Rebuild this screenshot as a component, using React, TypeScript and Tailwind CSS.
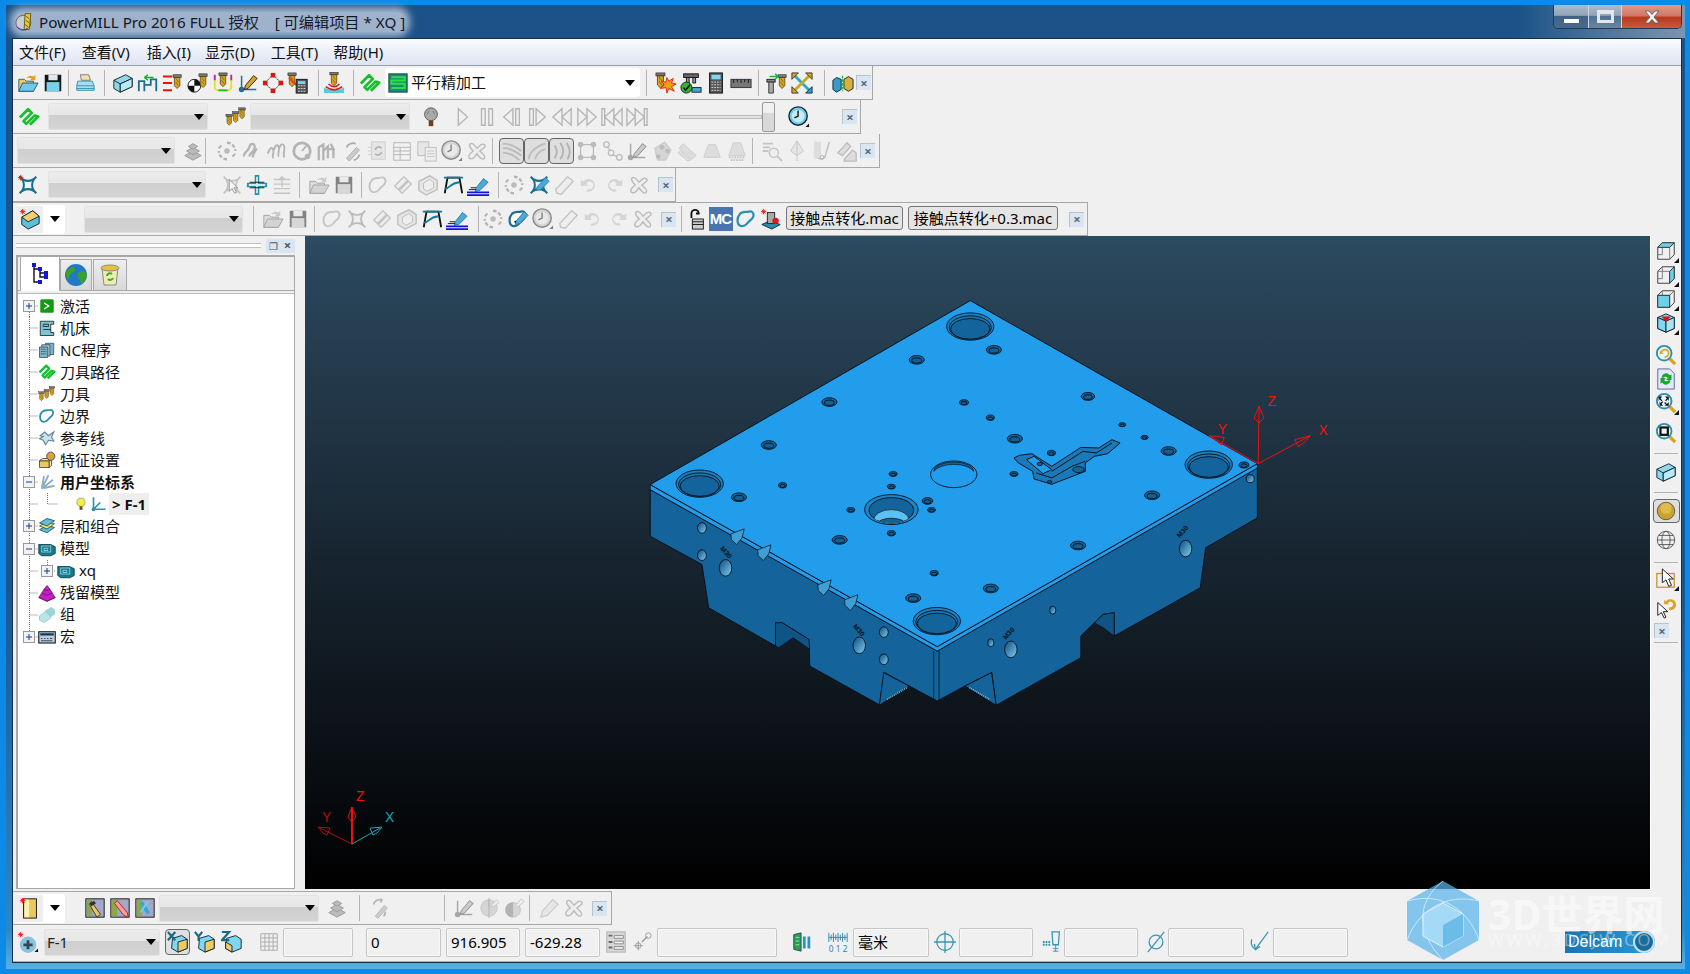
import React from 'react';

type N = React.ReactNode;
const TL = '#1e6f8f';
const G = '#d9a520';
const tool = (x: number, y: number, s = 1) => (
  <g transform={`translate(${x} ${y}) scale(${s})`}>
    <rect x="0" y="0" width="9" height="3" fill="#777" stroke="#222" strokeWidth=".6" />
    <path d="M1.5 3h6v9l-3 3-3-3z" fill={G} stroke="#3a2a00" strokeWidth=".7" />
    <path d="M3 4l3 4M3 8l3 4" stroke="#7a5500" strokeWidth=".8" />
  </g>
);
const cube = (a: string, b: string, c: string) => (
  <>
    <path d="M12 2l9 4v12l-9 4-9-4V6z" fill={a} stroke="#123" strokeWidth="1" />
    <path d="M3 6l9 4 9-4M12 10v12" fill="none" stroke="#123" strokeWidth="1" />
    <path d="M3 6l9 4v12l-9-4z" fill={b} stroke="#123" />
    <path d="M21 6l-9 4v12l9-4z" fill={c} stroke="#123" />
  </>
);
const wire = (fill: string) => (
  <>
    <path d="M8 3h13v13l-5 5H3V8z" fill="none" stroke="#333" />
    <path d="M3 8h13v13M16 8l5-5M8 3v13H3" fill="none" stroke="#777" />
    {fill === 't' && <path d="M3 8l5-5h13l-5 5z" fill="#6fd0ea" stroke="#333" />}
    {fill === 'r' && <path d="M16 8l5-5v13l-5 5z" fill="#6fd0ea" stroke="#333" />}
    {fill === 'f' && <rect x="3" y="8" width="13" height="13" fill="#6fd0ea" stroke="#333" />}
  </>
);
const lens = (inner: N) => (
  <>
    <path d="M15 15l7 7" stroke="#d9a520" strokeWidth="3.5" />
    <circle cx="10" cy="10" r="8" fill="#e8f6fa" stroke="#2e8ea8" strokeWidth="2" />
    {inner}
  </>
);
const BLOB = 'M5 7c3-4 7-2 10-3s6 1 5 5-4 4-6 7-6 5-9 3-3-9 0-12z';
const STAR = 'M3 3c5 6 13 6 18 0-6 5-6 13 0 18-5-6-13-6-18 0 6-5 6-13 0-18z';
const SPATH = 'M3 13L13 3l4 4L7 17zM8 18L18 8l3 3-10 10z';
const spark = <path d="M4 1v6M1 4h6M2 2l4 4M6 2L2 6" stroke="#f01010" strokeWidth="1" />;
const I: Record<string, N> = {
  app: <><circle cx="10" cy="13" r="9" fill="#c8ccd4" stroke="#555" /><path d="M12 2h7l-2 19h-6z" fill="#e6c93a" stroke="#5a4a00" /><path d="M13 5l4 3M13 10l4 3M12 15l4 3" stroke="#5a4a00" /><path d="M2 18q8 6 14 1" fill="none" stroke="#2a30c0" /></>,
  tW: wire('t'),
  rW: wire('r'),
  fW: wire('f'),
  open: <><path d="M2 8h6l2 2h8v11H2z" fill="#f0cc60" stroke="#1e5f80" /><path d="M2 21l4-9h17l-5 9z" fill="#72c8ea" stroke="#1e5f80" /><path d="M10 7c2-3 5-4 8-2l2-2v6h-6l2-2c-2-1-4-1-6 0z" fill="#e2a01c" /></>,
  save: <><rect x="3" y="3" width="18" height="18" fill="#161616" /><rect x="7" y="3" width="10" height="6" fill="#dfe8ec" /><rect x="5" y="11" width="14" height="10" fill="#74d2ea" /></>,
  print: <><path d="M7 3h9l2 6H8z" fill="#f5dfae" stroke="#777" /><path d="M4 10h16l2 5v5H3v-5z" fill="#a8dcef" stroke="#3c8fb0" /><path d="M3 15h19M3 18h19" stroke="#3c8fb0" /></>,
  box: <><path d="M2 9l13-6 7 4v9l-13 6-7-4z" fill="#8fd8ea" stroke="#123" /><path d="M2 9l7 4 13-6M9 13v9" fill="none" stroke="#123" /><path d="M9 13l13-6v9l-13 6z" fill="#b8eaf4" stroke="#123" /></>,
  leads: <><path d="M2 21V10h6v11M8 14h7V8h6v13" fill="none" stroke={TL} strokeWidth="2" /><path d="M8 6h10M8 6l4-3M8 6l4 3" stroke="#1aa830" strokeWidth="1.6" /></>,
  toolRed: <><path d="M1 5h10M1 12h10M1 20h10" stroke="#ee1010" strokeWidth="2.2" />{tool(12, 3)}</>,
  toolBall: <><circle cx="8" cy="15" r="7" fill="#fff" stroke="#111" /><path d="M8 8a7 7 0 0 1 7 7H8zM8 15v7a7 7 0 0 1-7-7z" fill="#111" />{tool(13, 2)}</>,
  toolU: <><path d="M3 3v12a4 4 0 0 0 4 5h10a4 4 0 0 0 4-5V3" fill="none" stroke="#e8e020" strokeWidth="2" /><path d="M3 3v6M21 3v6" stroke="#c020c0" strokeWidth="2" /><path d="M7 20h10" stroke="#18c030" strokeWidth="2" />{tool(7.5, 1)}</>,
  axisPen: <><path d="M5 4v15h16" fill="none" stroke={TL} strokeWidth="1.6" /><circle cx="5" cy="19" r="3" fill={TL} /><path d="M9 15l9-11 4 3-10 11-4 1z" fill={G} stroke="#222" /></>,
  dots: <><path d="M12 3l9 9-9 9-9-9z" fill="none" stroke="#222" strokeDasharray="2 1" /><rect x="9.5" y="1" width="5" height="5" fill="#d01818" /><rect x="18" y="9.5" width="5" height="5" fill="#d01818" /><rect x="9.5" y="18" width="5" height="5" fill="#d01818" /><rect x="1" y="9.5" width="5" height="5" fill="#d01818" /></>,
  toolCalc: <>{tool(1, 1)}<path d="M2 6l8 8" stroke="#ee4010" strokeWidth="2" /><rect x="10" y="8" width="12" height="15" fill="#555" stroke="#111" /><rect x="12" y="10" width="8" height="3" fill="#7fd8ef" /><path d="M12 15h8M12 18h8M12 21h8" stroke="#ddd" strokeDasharray="2 1" /></>,
  mill: <><path d="M1 23V17q11 6 22 0v6z" fill="#5cc8e0" /><path d="M3 16q9 7 18 0M6 13q6 6 12 0" fill="none" stroke="#e01818" strokeWidth="1.6" />{tool(7.5, 0)}</>,
  path: <path d="M2 12.500L11 3.500l4 4-9 9 3 3 9-9 4 1-9 9" fill="none" stroke="#16c02c" strokeWidth="3" strokeLinejoin="round" />,
  greenBox: <><rect x="1" y="1" width="22" height="22" fill="#1a8a7a" stroke="#0a3a30" /><path d="M4 5h16v4H4v4h16v5H4" fill="none" stroke="#30e040" strokeWidth="2.4" /></>,
  toolStar: <>{tool(1, 1, 1.1)}<path d="M13 6l2 4 5-3-2 5 5 1-5 3 3 5-6-3-2 5-1-6-6 1 4-4-3-4 5 1z" fill="#f0a010" stroke="#e02010" /></>,
  toolCheck: <><rect x="4" y="2" width="16" height="4" fill="#666" stroke="#111" /><path d="M7 6h3v6H7zM14 6h3v6h-3z" fill="#999" stroke="#111" /><rect x="13" y="17" width="10" height="5" fill="#4aa8d0" stroke="#123" /><circle cx="7" cy="17" r="6" fill="#38b030" stroke="#123" /><path d="M4 17l2 3 5-6" fill="none" stroke="#111" strokeWidth="1.6" /></>,
  calc: <><rect x="5" y="1" width="14" height="22" fill="#555" stroke="#111" /><rect x="7" y="3" width="10" height="5" fill="#7fd8ef" /><path d="M7 11h10M7 14h10M7 17h10M7 20h10" stroke="#ddd" strokeDasharray="2 1" /></>,
  ruler: <><rect x="1" y="8" width="22" height="9" fill="#777" stroke="#333" /><path d="M4 8v4M8 8v3M12 8v4M16 8v3M20 8v4" stroke="#111" /></>,
  toolMove: <><rect x="1" y="8" width="9" height="3" fill="#888" stroke="#222" /><path d="M3 11h5v12H3z" fill="#aaa" stroke="#333" />{tool(13, 3)}<path d="M4 5h9M13 5l-3-3M13 5l-3 3" stroke="#22b030" strokeWidth="1.6" /></>,
  arrows4: <><path d="M3 3l18 18" stroke="#2ca8cf" strokeWidth="3" /><path d="M21 3L3 21" stroke="#c9a820" strokeWidth="3" /><path d="M1 1h7L1 8zM23 1v7l-7-7zM1 23v-7l7 7z" fill={G} stroke="#333" /><path d="M23 23h-7l7-7z" fill="#2ca8cf" stroke="#123" /></>,
  dualBox: <><path d="M1 9l4-3 5 2v11l-5 3-4-3z" fill="#3a9ac8" stroke="#123" /><path d="M13 8l5-3 5 3v10l-5 3-5-3z" fill="#d8b040" stroke="#123" /><path d="M11.5 4v17" stroke="#22c040" strokeWidth="1.5" strokeDasharray="3 1" /></>,
  tools3: <>{tool(1, 9, .8)}{tool(8, 6, .8)}{tool(15, 2, .8)}</>,
  bulb: <><circle cx="12" cy="9" r="7" fill="#aaa" stroke="#555" /><path d="M10 5l-2 4M14 5l2 4" stroke="#777" /><rect x="9.5" y="16" width="5" height="6" fill="#7a3a20" /></>,
  bulbY: <><circle cx="12" cy="9" r="7" fill="#f6ee40" stroke="#777" /><rect x="9.5" y="16" width="5" height="6" fill="#6a4a20" /></>,
  play: <path d="M8 3l10 9-10 9z" fill="none" stroke="#b5b5b5" strokeWidth="1.5" />,
  pause: <path d="M6 3h4v18H6zM14 3h4v18h-4z" fill="none" stroke="#b5b5b5" strokeWidth="1.5" />,
  stepB: <path d="M13 3L3 12l10 9zM16 3h4v18h-4z" fill="none" stroke="#b5b5b5" strokeWidth="1.5" />,
  stepF: <path d="M11 3l10 9-10 9zM4 3h4v18H4z" fill="none" stroke="#b5b5b5" strokeWidth="1.5" />,
  prev: <path d="M12 3L2 12l10 9zM22 3l-10 9 10 9z" fill="none" stroke="#b5b5b5" strokeWidth="1.5" />,
  next: <path d="M12 3l10 9-10 9zM2 3l10 9-10 9z" fill="none" stroke="#b5b5b5" strokeWidth="1.5" />,
  first: <path d="M1 3h3v18H1zM14 3L4 12l10 9zM23 3l-9 9 9 9z" fill="none" stroke="#b5b5b5" strokeWidth="1.5" />,
  last: <path d="M23 3h-3v18h3zM10 3l10 9-10 9zM1 3l9 9-9 9z" fill="none" stroke="#b5b5b5" strokeWidth="1.5" />,
  clock: <><circle cx="11" cy="11" r="10" fill="#72cbe8" stroke="#123" strokeWidth="1.5" /><circle cx="11" cy="11" r="7" fill="#c4ecf6" /><path d="M11 5v6l-4 2" fill="none" stroke="#111" strokeWidth="1.5" /><path d="M23 19v4h-4z" fill="#111" /></>,
  stack: <g fill="#bbb" stroke="#999"><path d="M3 17l9-5 9 5-9 5z" /><path d="M5 12l7-4 7 4-7 4z" /><path d="M7 7l5-3 5 3-5 3z" /></g>,
  spin: <><circle cx="12" cy="12" r="3" fill="#888" /><path d="M12 3a9 9 0 0 1 9 9M12 21a9 9 0 0 1-9-9" fill="none" stroke="#777" strokeWidth="2.5" strokeDasharray="4 2" /><path d="M3 9l3-3M21 15l-3 3" stroke="#777" strokeWidth="2" /></>,
  wave: <path d="M3 18c0-6 5-5 6-10s6-5 6 0-5 5-6 10M13 19c0-6 3-6 4-10" fill="none" stroke="#777" strokeWidth="2.5" />,
  wave2: <path d="M2 15c2-7 5-8 6-4s-2 7 0 9M8 12c2-7 5-8 6-4s-2 8 0 10M14 10c2-7 5-6 6-3s-2 9 0 12" fill="none" stroke="#777" strokeWidth="2" />,
  gauge: <><circle cx="12" cy="12" r="9" fill="none" stroke="#777" strokeWidth="3" /><path d="M12 12l5-6" stroke="#777" strokeWidth="2" /><circle cx="18" cy="18" r="3" fill="#777" /></>,
  pArrow: <path d="M3 22V8l5-3v17M8 12l5-5v13M13 10h6l-3-6M19 10v10" fill="none" stroke="#777" strokeWidth="2.5" />,
  penRot: <><path d="M6 20l11-12 3 3-11 12z" fill="#aaa" stroke="#666" /><path d="M6 8a8 8 0 0 1 10-4M20 16a8 8 0 0 1-6 6" fill="none" stroke="#666" strokeWidth="2" /></>,
  docs: <><rect x="6" y="2" width="15" height="19" fill="#ddd" stroke="#aaa" /><path d="M2 8h4M2 12h4M2 16h4" stroke="#aaa" /><path d="M10 11a4 4 0 0 1 7-2M17 13a4 4 0 0 1-7 2" fill="none" stroke="#777" strokeWidth="2" /></>,
  table: <><rect x="3" y="3" width="18" height="19" fill="#f4f4f4" stroke="#777" /><path d="M3 8h18M3 12h18M3 16h18M10 8v14" stroke="#777" /></>,
  copy: <><rect x="2" y="2" width="12" height="15" fill="#ddd" stroke="#888" /><rect x="10" y="8" width="12" height="15" fill="#eee" stroke="#888" /><path d="M12 12h8M12 15h8M12 18h8" stroke="#999" /></>,
  cross: <path d="M5 4c3-2 5 3 7 5 2-2 5-6 8-4s-2 5-5 7c2 2 7 5 5 8s-6-2-8-5c-2 3-5 7-8 5s1-6 4-8C6 10 2 6 5 4z" fill="#eee" stroke="#888" strokeWidth="1.5" />,
  surf1: <path d="M2 9c6-1 12 2 20 8M2 14c6 0 12 2 18 8M2 4c8 0 14 3 20 8" fill="none" stroke="#999" strokeWidth="2" />,
  surf2: <path d="M3 21c1-8 8-14 18-17M10 21c1-5 5-9 11-11" fill="none" stroke="#999" strokeWidth="2" />,
  surf3: <path d="M4 6c4 6 2 10 0 14M10 3c5 7 4 13 0 18M17 3c4 6 4 13 1 18" fill="none" stroke="#888" strokeWidth="2" />,
  dots4: <><path d="M5 5h14v14H5z" fill="none" stroke="#888" strokeWidth="1.4" /><g fill="#888"><circle cx="5" cy="5" r="3" /><circle cx="19" cy="5" r="3" /><circle cx="5" cy="19" r="3" /><circle cx="19" cy="19" r="3" /></g></>,
  nodes: <g fill="none" stroke="#888" strokeWidth="1.4"><circle cx="6" cy="5" r="3" /><circle cx="11" cy="14" r="3" /><circle cx="20" cy="19" r="3" /><path d="M7 8l3 3M13 16l4 2" /></g>,
  fan: <><path d="M4 9l11-7 7 9-6 11H7z" fill="#bbb" stroke="#999" /><g fill="#888"><circle cx="8" cy="18" r="2.5" /><circle cx="12" cy="8" r="2.5" /><circle cx="18" cy="12" r="2.5" /></g></>,
  diag: <path d="M3 9l5-5 14 13-5 4zM2 14l3-2 11 10-3 1z" fill="#ccc" stroke="#aaa" />,
  trap: <path d="M8 5h8l5 14H3z" fill="#ccc" stroke="#aaa" />,
  trap2: <><path d="M8 3h8l5 14H3z" fill="#ccc" stroke="#aaa" /><path d="M3 19h18M5 22h14" stroke="#999" strokeDasharray="2 1" strokeWidth="2" /></>,
  search: <><path d="M2 4h11M2 8h8M2 12h6" stroke="#999" strokeWidth="2" /><circle cx="14" cy="14" r="5" fill="#eee" stroke="#999" strokeWidth="1.5" /><path d="M18 18l5 5" stroke="#999" strokeWidth="2" /></>,
  bulbT: <><path d="M12 1l7 11-7 5-7-5z" fill="#ddd" stroke="#999" /><path d="M12 1v22" stroke="#999" /></>,
  uT: <><path d="M5 2v14a6 6 0 0 0 10 3l5-17" fill="none" stroke="#888" strokeWidth="1.5" /><path d="M3 2l8 0v18H3z" fill="#ccc" /><circle cx="12" cy="19" r="2" fill="none" stroke="#777" /></>,
  stackT: <path d="M2 14L12 3l4 4-9 10zM9 21l9-10 4 3v9H9z" fill="#ccc" stroke="#888" strokeWidth="1.4" />,
  star: <><path d={STAR} fill="#e8f6fa" stroke={TL} strokeWidth="2.2" />{spark}</>,
  star2: <path d={STAR} fill="#eee" stroke="#888" strokeWidth="2" />,
  starCur: <><path d={STAR} fill="#eee" stroke="#999" strokeWidth="2" /><path d="M9 6v13l3-3 3 5 2-1-3-5h4z" fill="#fff" stroke="#333" /></>,
  plus: <><path d="M12 1v22M1 12h22" stroke="#2a90a8" strokeWidth="5" /><path d="M12 3v18M3 12h18" stroke="#c8eef6" strokeWidth="2" /><path d="M4 9h16M4 15h16" stroke="#111" /></>,
  lift: <path d="M3 6h18M3 11h18M3 16h18M3 21h18M12 14V3M9 6l3-3 3 3" fill="none" stroke="#999" strokeWidth="1.5" />,
  blob: <path d={BLOB} fill="none" stroke="#999" strokeWidth="2" />,
  blobT: <path d={BLOB} fill="none" stroke="#2a90b0" strokeWidth="2.4" />,
  sShape: <path d={SPATH} fill="#eee" stroke="#999" strokeWidth="1.5" />,
  boxIn: <><path d="M2 8l12-6 8 5v10l-12 6-8-5z" fill="#ddd" stroke="#888" strokeWidth="1.4" /><path d="M7 10l7-4 4 3v6l-7 4-4-3z" fill="#eee" stroke="#888" /></>,
  frame: <><path d="M3 21L6 4h13l3 17" fill="none" stroke="#111" strokeWidth="2" /><path d="M2 4h21M3 16c6 0 5-6 16-7" fill="none" stroke="#167a96" strokeWidth="2" /></>,
  penBlue: <><path d="M10 15l8-10 5 4-9 9-5 1z" fill="#4aaad8" stroke="#2a7aa8" /><path d="M4 15h6M2 17h8" stroke="#111" /><path d="M0 20h24M0 23h24" stroke="#1010e0" strokeWidth="2" /></>,
  starPen: <><path d={STAR} fill="#e8f6fa" stroke={TL} strokeWidth="2.2" /><path d="M10 14l9-10 4 4-9 9-5 1z" fill="#4aaad8" stroke="#2a7aa8" /></>,
  blobPen: <><path d={BLOB} fill="#fff" stroke={TL} strokeWidth="2.4" /><path d="M10 14l9-10 4 4-9 9-5 1z" fill="#4aaad8" stroke="#2a7aa8" /><circle cx="9" cy="15" r="1" fill="#111" /></>,
  eraser: <path d="M3 17L16 3l6 5L9 22l-5-1z" fill="#eee" stroke="#999" strokeWidth="1.5" />,
  undo: <path d="M6 8a7 7 0 1 1 3 11l2-3a4 4 0 1 0-2-5l2 2H3V6l2 2z" fill="#bbb" />,
  redo: <path d="M18 8a7 7 0 1 0-3 11l-2-3a4 4 0 1 1 2-5l-2 2h8V6l-2 2z" fill="#bbb" />,
  lock: <><path d="M7 11V6a4 4 0 0 1 8 0h-3" fill="none" stroke="#111" strokeWidth="2" /><rect x="8" y="12" width="12" height="11" fill="#ccc" stroke="#111" /><path d="M8 15h12M8 18h12" stroke="#111" /></>,
  macro: <><path d="M2 18l9-4 11 4-9 5z" fill="#2a90b0" stroke="#123" /><rect x="8" y="5" width="8" height="12" fill="#aaa" stroke="#222" /><circle cx="17" cy="14" r="3.5" fill="#e01818" />{spark}</>,
  boxNew: <><path d="M3 10l12-7 7 6v8l-12 6-7-5z" fill="#5cc0d8" stroke="#123" /><path d="M3 10l7 5 12-6-7-6z" fill="#f2d070" stroke="#123" />{spark}</>,
  cubeIso: <>{cube('#7fd8ef', '#7fd8ef', '#a8e4f2')}<path d="M7 5h10l-5 6z" fill="#e01010" /></>,
  zBack: lens(<path d="M6 11a5 5 0 1 1 4 4l1-2a3 3 0 1 0-3-3l2 1H5V7l1 1z" fill={G} />),
  refDoc: <><path d="M3 1h13l5 5v17H3z" fill="#e4e8f8" stroke="#5060a0" /><path d="M7 10a5 5 0 0 1 9-2l2-1v6h-6l2-2a3 3 0 0 0-5 0zM17 14a5 5 0 0 1-9 2l-2 1v-6h6l-2 2a3 3 0 0 0 5 0z" fill="#18a830" /></>,
  zFit: lens(<path d="M5 5h3L6 7l2 2-1 1-2-2-1 2V5zM15 5v5l-1-2-2 2-1-1 2-2-2-2zM5 15v-5l1 2 2-2 1 1-2 2 2 2zM15 15h-5l2-1-2-2 1-1 2 2 2-2z" fill="#111" />),
  zBox: lens(<rect x="6" y="6" width="8" height="8" fill="none" stroke="#111" strokeWidth="2.4" />),
  gold: <><circle cx="12" cy="12" r="9.5" fill="#caa22e" stroke="#555" /><circle cx="12" cy="9" r="6" fill="#e0bc50" /></>,
  globeW: <g fill="none" stroke="#555"><circle cx="12" cy="12" r="9.5" /><ellipse cx="12" cy="12" rx="4.5" ry="9.5" /><path d="M2.5 12h19M4 7h16M4 17h16" /></g>,
  curBox: <><rect x="2" y="6" width="19" height="15" fill="none" stroke="#c4962a" strokeWidth="1.4" /><path d="M8 1v15l4-3 3 7 3-1-3-7h5z" fill="#fff" stroke="#111" /></>,
  curUndo: <><path d="M3 6v14l4-3 3 6 2-1-3-6h5z" fill="#fff" stroke="#111" /><path d="M12 5a6 6 0 1 1 3 9l1-3a3 3 0 1 0-2-4l2 1h-6V3l2 2z" fill={G} /></>,
  treeI: <><path d="M6 3v17h6M6 7h6v8h6M12 11h5" fill="none" stroke="#111" strokeWidth="1.4" /><g fill="#1414e0"><rect x="4" y="1" width="4" height="4" /><rect x="10" y="5" width="4" height="4" /><rect x="16" y="9" width="4" height="4" /><rect x="16" y="13" width="4" height="4" /><rect x="10" y="18" width="4" height="4" /></g></>,
  globe: <><circle cx="12" cy="12" r="11" fill="#1f78c8" /><path d="M3 7c4-3 7-4 8-2s-2 5-4 6-1 5-3 5-3-6-1-9zM14 10c3-3 8-2 9 1 0 5-3 9-6 10 0-4-5-7-3-11z" fill="#3aa030" /></>,
  bin: <><path d="M4 5h16l-2 17H6z" fill="#f0ecb0" stroke="#888" /><ellipse cx="12" cy="5" rx="9" ry="3" fill="#e8c040" stroke="#888" /><path d="M9 13a3 3 0 0 1 5-2M15 15a3 3 0 0 1-5 1" fill="none" stroke="#38a838" strokeWidth="2" /></>,
  active: <><rect x="3" y="3" width="18" height="18" rx="2" fill="#139a13" /><path d="M8 7l8 5-8 5v-2l5-3-5-3z" fill="#fff" /></>,
  machine: <><path d="M3 3h18v4h-4v11h4v4H3z" fill="#7cc4d4" stroke="#111" /><path d="M7 7h7v3H7zM7 14h10" stroke="#111" fill="none" /></>,
  nc: <><path d="M10 3h11v15H10z" fill="#7fb4c4" stroke="#345" /><path d="M5 5h11v15H5z" fill="#9cc8d4" stroke="#345" /><path d="M2 8h11v14H2z" fill="#7fb4c4" stroke="#345" /><path d="M4 11h7M4 14h7M4 17h7" stroke="#234" strokeDasharray="2 1" /></>,
  refl: <path d="M3 9l6-5 5 5 7-5-3 7 3 5-7-1-4 6-3-6-5-2 5-3z" fill="#cfe4ea" stroke="#5a8898" strokeWidth="1.5" />,
  feature: <><path d="M2 13h13v9H2z" fill="#e8c860" stroke="#333" /><path d="M2 13l4-3h12l-3 3zM15 13l3-3v9l-3 3z" fill="#f4e0a0" stroke="#333" /><circle cx="17" cy="7" r="5.5" fill="#dca040" stroke="#333" /></>,
  ucs: <path d="M5 21L8 4M5 21L20 9M5 21L14 3M8 20l14-3" fill="none" stroke="#8ab0c0" strokeWidth="2.4" />,
  xyz: <><path d="M6 3v16h16M6 19l9-9" fill="none" stroke="#2a90b0" strokeWidth="2.2" /><circle cx="6" cy="19" r="2.5" fill="#2a90b0" /></>,
  layers: <><path d="M2 17l10-6 10 3-10 7z" fill="#5cc0d8" stroke="#234" /><path d="M2 12l10-6 10 3-10 7z" fill="#f0e060" stroke="#234" /><path d="M2 8l10-6 10 3-10 7z" fill="#5cc0d8" stroke="#234" /></>,
  model: <><path d="M1 6h16l6 3v9l-6 3H5l-4-3z" fill="#157a8c" stroke="#052a34" /><rect x="5" y="8" width="12" height="8" fill="none" stroke="#9de" /><path d="M8 11h5v3H8z" fill="none" stroke="#bde" /></>,
  stock: <><path d="M12 2l4 5 3 5 4 6-11 5L1 18l4-6 3-5z" fill="#c41ec4" stroke="#601060" /><path d="M8 7l4 2 4-2M5 12l7 3 7-3M1 18l11 5 11-5" fill="none" stroke="#601060" /></>,
  group: <><path d="M2 13l9-6 6 3v6l-9 6-6-3z" fill="#b8e4e8" stroke="#8cc" /><path d="M9 7l9-5 4 3v6l-5 3z" fill="#9cd4d8" stroke="#8cc" /></>,
  macroT: <><rect x="1" y="5" width="22" height="15" fill="#bcd" stroke="#111" strokeWidth="1.4" /><rect x="3" y="7" width="18" height="3" fill="#0a3a5a" /><path d="M4 14h2M8 14h2M12 14h2M16 14h3M4 17h15" stroke="#123" /></>,
  boxGold: <><rect x="5" y="2" width="14" height="21" fill="#e8c860" stroke="#111" /><path d="M6 3h5v19H6z" fill="#fff3b0" />{spark}</>,
  bk1: <><rect x="2" y="2" width="20" height="20" fill="#a4a8c8" stroke="#111" /><path d="M3 3h6v18H3z" fill="#8ca848" /><path d="M8 5l10 14-4 3L6 8z" fill="#e8c860" stroke="#333" /><path d="M6 7l5-3 2 3-5 3z" fill="#333" /></>,
  bk2: <><rect x="2" y="2" width="20" height="20" fill="#a4a8c8" stroke="#111" /><path d="M3 3h6v18H3z" fill="#8ca848" /><path d="M6 7l10 13 5 2-1-5L9 4z" fill="#f0a0a0" stroke="#c01818" /></>,
  bk3: <><rect x="2" y="2" width="20" height="20" fill="#a4a8c8" stroke="#111" /><path d="M3 3h6v18H3z" fill="#8ca848" /><path d="M8 6l8 12" stroke="#30a8e0" strokeWidth="4" /><path d="M15 5l-8 12" stroke="#70d0f0" strokeWidth="2" /></>,
  drill: <><path d="M8 21l10-12 3 3-10 11z" fill="#aaa" stroke="#777" /><path d="M6 8a8 8 0 0 1 9-5l-1 3M19 16a8 8 0 0 1-2 5" fill="none" stroke="#777" strokeWidth="2" /></>,
  dia1: <><circle cx="12" cy="12" r="9" fill="#bbb" stroke="#999" /><path d="M12 1v22" stroke="#777" /><path d="M12 12a9 9 0 0 1 0-9z" fill="#888" /><path d="M14 10l6-7 3 3-7 5z" fill="#eee" stroke="#999" /></>,
  dia2: <><circle cx="11" cy="14" r="8" fill="#bbb" stroke="#999" /><path d="M11 6v16h-1A8 8 0 0 1 11 6z" fill="#777" /><path d="M14 9l6-7 3 3-7 6z" fill="#eee" stroke="#999" /></>,
  pencilG: <path d="M3 22l2-7L16 3l6 5-12 12z" fill="#ddd" stroke="#aaa" strokeWidth="1.4" />,
  ucsNew: <><circle cx="12" cy="15" r="9" fill="#8ac4dc" /><path d="M12 10v10M7 15h10" stroke="#345" strokeWidth="3" />{spark}<path d="M23 19v4h-4z" fill="#111" /></>,
  xC: <><path d="M6 8l10-3 6 4v10l-10 4-7-4z" fill="#7fd8ef" stroke="#123" /><path d="M12 12l10-3v10l-10 4z" fill="#f0cc60" stroke="#123" /><path d="M1 1l8 9M9 1l-8 9" stroke="#1a6a80" strokeWidth="2.4" /></>,
  yC: <><path d="M6 8l10-3 6 4v10l-10 4-7-4z" fill="#7fd8ef" stroke="#123" /><path d="M12 12l10-3v10l-10 4z" fill="#f0cc60" stroke="#123" /><path d="M1 1l4 5 4-5M5 6v5" fill="none" stroke="#1a6a80" strokeWidth="2.4" /></>,
  zC: <><path d="M6 8l10-3 6 4v10l-10 4-7-4z" fill="#7fd8ef" stroke="#123" /><path d="M5 12l7 4v7l-7-4z" fill="#f0cc60" stroke="#123" /><path d="M1 1h8L1 10h8" fill="none" stroke="#1a6a80" strokeWidth="2.4" /></>,
  grid: <path d="M3 3h18v18H3zM3 7.5h18M3 12h18M3 16.5h18M7.5 3v18M12 3v18M16.5 3v18" fill="none" stroke="#aaa" />,
  xyzL: <><rect x="2" y="1" width="20" height="22" fill="#d8d8d8" stroke="#aaa" /><path d="M10 5h10v3H10zM10 11h10v3H10zM10 17h10v3H10z" fill="#f0f0f0" stroke="#888" /><path d="M4 5h4M4 12h4M4 18h4" stroke="#666" strokeWidth="2" /></>,
  snap: <><path d="M4 19h10M9 14v10" stroke="#999" transform="translate(0 -3)" /><circle cx="9" cy="16" r="3" fill="none" stroke="#999" /><path d="M13 12l6-6" stroke="#999" strokeWidth="1.5" /><circle cx="20" cy="5" r="3" fill="none" stroke="#999" /></>,
  rpm: <><path d="M3 4l8-2v20l-8-2z" fill="#2a9a60" stroke="#345" /><path d="M5 7h4M5 11h4M5 15h4" stroke="#9f6" /><rect x="13" y="6" width="3" height="13" fill="#2a90c8" /><rect x="18" y="6" width="3" height="13" fill="#2a90c8" /></>,
  r012: <><path d="M2 2v10M7 2v10M12 2v10M17 2v10M22 2v10M2 7h20M4.500 4v6M9.500 4v6M14.500 4v6M19.500 4v6" stroke="#2a8aa8" /><text x="2" y="23" fontSize="9" fill="#2a8aa8" letterSpacing="2.500">012</text></>,
  cCross: <><circle cx="12" cy="12" r="9" fill="none" stroke="#3a98b0" strokeWidth="1.4" /><path d="M12 0v24M0 12h24" stroke="#3a98b0" strokeWidth="1.4" /></>,
  toolD: <><path d="M12 1h8l-1 14h-6z" fill="none" stroke="#3a98b0" strokeWidth="1.4" /><path d="M2 12h9M2 15h9" stroke="#3a98b0" strokeWidth="2" strokeDasharray="2 1" /><path d="M16 15v8M13 19h6M13 22h6" stroke="#3a98b0" /></>,
  dia: <><circle cx="12" cy="12" r="7.500" fill="none" stroke="#3a98b0" strokeWidth="1.4" /><path d="M21 1L3 23" stroke="#3a98b0" strokeWidth="1.4" /></>,
  angle: <><path d="M22 1L8 20" stroke="#3a98b0" strokeWidth="1.4" /><path d="M4 9a11 11 0 0 0 5 12M8 20l-1-6M8 20l5-3" fill="none" stroke="#3a98b0" strokeWidth="1.4" /></>,
};

function Ic({ n, off, s = 'w-[22px] h-[22px]' }: { n: string; off?: boolean; s?: string }) {
  return <svg viewBox="0 0 24 24" className={`${s} shrink-0 ${off ? 'grayscale opacity-50' : ''}`} strokeWidth="1">{I[n]}</svg>;
}
function Slot({ n, off, cl = '' }: { n: string; off?: boolean; cl?: string }) {
  return <div className={`w-[25px] h-[26px] shrink-0 flex items-center justify-center ${cl}`}><Ic n={n} off={off} /></div>;
}
function Slots({ ns, off }: { ns: string[]; off?: boolean }) {
  return <>{ns.map((n, i) => <Slot key={i} n={n} off={off} />)}</>;
}
function Sep({ cl }: { cl: string }) {
  return <div className={`w-px h-[26px] bg-[#b4b4b4] shrink-0 ${cl}`} />;
}
function Arrow() {
  return <span className="block w-0 h-0 border-x-[5px] border-x-transparent border-t-[6px] border-t-black shrink-0" />;
}
function Combo({ cl, text }: { cl: string; text?: string }) {
  return (
    <div className={`h-[27px] shrink-0 rounded-[2px] bg-[linear-gradient(#ececec_0%,#e6e6e6_45%,#cfcfcf_46%,#d4d4d4_100%)] border border-[#e2e2e2] flex items-center justify-between pl-[2px] pr-[3px] ${cl}`}>
      <span className="text-[15px] text-[#222]">{text}</span>
      <Arrow />
    </div>
  );
}
function Close({ cl }: { cl: string }) {
  return (
    <div className={`w-[15px] h-[15px] shrink-0 bg-[#d9e6f2] border-t border-l border-[#b5c2cf] flex items-center justify-center text-[13px] leading-none font-bold text-[#5a6a7a] ${cl}`}>×</div>
  );
}
function Band({ cl = '', children }: { cl?: string; children: N }) {
  return <div className={`flex items-center h-[34px] w-fit border-r border-b border-[#a8a8a8] ${cl}`}>{children}</div>;
}
function WhiteDrop({ n }: { n: string }) {
  return (
    <div className="ml-[3px] w-[49px] h-[29px] bg-white rounded-[3px] flex items-center shrink-0">
      <div className="w-[27px] h-[27px] bg-[#eeeeee] flex items-center justify-center"><Ic n={n} /></div>
      <div className="ml-[7px]"><Arrow /></div>
    </div>
  );
}
function Btn({ n, cl = '', off }: { n: string; cl?: string; off?: boolean }) {
  return <div className={`w-[25px] h-[26px] shrink-0 flex items-center justify-center rounded-[4px] border border-[#666] bg-[#dedede] ${cl}`}><Ic n={n} off={off} /></div>;
}
function Field({ cl, children }: { cl: string; children?: N }) {
  return <div className={`h-[29px] shrink-0 border border-[#c6c6c6] rounded-[2px] bg-[#f0f0f0] shadow-[inset_0_0_0_1px_#f8f8f8] flex items-center pl-[4px] text-[15px] text-black ${cl}`}>{children}</div>;
}

const X = (z: number) => 640 + z / 2.24 - 306;
const Y = (z: number) => 290 + z / 3 - 236;
const pts = (a: number[]) => {
  const o: string[] = [];
  for (let i = 0; i < a.length; i += 2) o.push(`${X(a[i]).toFixed(1)},${Y(a[i + 1]).toFixed(1)}`);
  return o.join(' ');
};
const K = '#04121c';
const TOP = '#229dec';
const SIDE = '#14639a';
function E({ x, y, rx, ry, f = SIDE, s = K }: { x: number; y: number; rx: number; ry: number; f?: string; s?: string }) {
  return <ellipse cx={X(x)} cy={Y(y)} rx={rx / 2.24} ry={ry / 3} fill={f} stroke={s} strokeWidth=".9" />;
}
const smallHoles = [
  [795, 180, 17, 13], [622, 210, 17, 13], [426, 337, 17, 13], [1006, 320, 15, 12], [728, 338, 10, 8], [787, 384, 9, 8], [290, 466, 17, 13],
  [1083, 405, 8, 6], [1133, 443, 8, 6], [842, 447, 17, 13], [924, 490, 9, 8], [1187, 484, 17, 13], [840, 553, 9, 7], [569, 553, 9, 7],
  [565, 591, 9, 7], [321, 587, 9, 8], [223, 623, 17, 13], [1150, 617, 17, 13], [646, 634, 12, 10], [655, 661, 9, 7], [474, 661, 9, 7],
  [449, 751, 17, 13], [565, 731, 9, 8], [984, 768, 17, 13], [661, 851, 9, 8], [788, 897, 17, 13], [614, 926, 17, 13], [1356, 526, 11, 9],
];
const bigHoles = [[742, 110], [135, 582], [1277, 525], [667, 995]];
const sideHoles = [
  [140, 715, 10, 16], [140, 797, 10, 16], [193, 835, 14, 25], [493, 1068, 14, 25], [548, 1028, 10, 16], [548, 1110, 10, 16],
  [788, 1060, 7, 12], [833, 1080, 14, 25], [927, 962, 7, 12], [1225, 777, 14, 25], [1370, 567, 9, 12],
];
const bumps = [[0, 0], [60, 48], [195, 153], [255, 198]];

function Scene() {
  return (
    <svg className="w-full h-full block" viewBox="0 0 1345 654">
      <defs>
        <linearGradient id="sh" x1="0" y1="0" x2="1" y2="1">
          <stop offset="0" stopColor="#0d4a78" />
          <stop offset="1" stopColor="#7fd0f5" />
        </linearGradient>
        <clipPath id="ch"><ellipse cx={X(565)} cy={Y(662)} rx={50 / 2.24} ry={38 / 3} /></clipPath>
      </defs>
      <polygon points={pts([24, 600, 24, 740, 140, 825, 155, 955, 305, 1070, 305, 1000, 320, 1000, 380, 1050, 382, 1130, 540, 1248, 550, 1150, 605, 1190, 668, 1235, 730, 1190, 790, 1150, 800, 1248, 990, 1105, 990, 1040, 1040, 975, 1065, 970, 1065, 1040, 1258, 895, 1270, 775, 1386, 685, 1386, 535, 668, 1085])} fill={SIDE} stroke={K} strokeWidth="1" />
      <polygon points={pts([305, 1070, 312, 1075, 345, 1045, 382, 1080, 380, 1050, 320, 1000, 305, 1000])} fill="#0f5484" stroke={K} strokeWidth=".8" />
      <polygon points={pts([990, 1040, 1020, 1000, 1040, 1015, 1065, 1040, 1065, 970, 1040, 975])} fill="#0f5484" stroke={K} strokeWidth=".8" />
      <polygon points={pts([548, 1150, 605, 1190, 538, 1248])} fill={SIDE} stroke={K} strokeWidth="1" />
      <polygon points={pts([790, 1150, 730, 1190, 800, 1248])} fill={SIDE} stroke={K} strokeWidth="1" />
      <line x1={X(555)} y1={Y(1230)} x2={X(600)} y2={Y(1195)} stroke="#8fb8d0" strokeWidth="1.5" strokeDasharray="1 1" />
      <line x1={X(740)} y1={Y(1195)} x2={X(785)} y2={Y(1230)} stroke="#8fb8d0" strokeWidth="1.5" strokeDasharray="1 1" />
      <polyline points={pts([660, 1085, 660, 1235])} fill="none" stroke={K} strokeWidth=".8" />
      <polyline points={pts([672, 1085, 672, 1235])} fill="none" stroke={K} strokeWidth=".8" />
      {sideHoles.map((h, i) => <E key={i} x={h[0]} y={h[1]} rx={h[2]} ry={h[3]} f="url(#sh)" />)}
      <polygon points={pts([24, 585, 24, 600, 668, 1085, 1386, 535, 1386, 522, 668, 1072])} fill={TOP} stroke={K} strokeWidth=".8" />
      <polygon points={pts([742, 32, 1386, 522, 668, 1072, 24, 585])} fill={TOP} stroke={K} strokeWidth="1" />
      {smallHoles.map((h, i) => (
        <g key={i}><E x={h[0]} y={h[1]} rx={h[2]} ry={h[3]} /><E x={h[0]} y={h[1] + 2} rx={h[2] * 0.65} ry={h[3] * 0.6} f="#155f92" /></g>
      ))}
      {bigHoles.map((h, i) => (
        <g key={i}>
          <E x={h[0]} y={h[1]} rx={53} ry={41} f="#1a7fc0" />
          <E x={h[0]} y={h[1] + 3} rx={47} ry={35} f="#1b78b5" />
          <E x={h[0]} y={h[1] + 7} rx={44} ry={31} f="#13639c" />
        </g>
      ))}
      <E x={705} y={554} rx={52} ry={40} f={TOP} />
      <path d={`M${X(660)} ${Y(545)} A${48 / 2.24} ${32 / 3} 0 0 1 ${X(750)} ${Y(545)} A${45 / 2.24} ${28 / 3} 0 0 0 ${X(660)} ${Y(545)}`} fill={SIDE} stroke={K} strokeWidth=".7" />
      <E x={565} y={660} rx={60} ry={45} f="#1c85c8" />
      <E x={565} y={662} rx={50} ry={38} f={SIDE} />
      <g clipPath="url(#ch)">
        <ellipse cx={X(565)} cy={Y(692)} rx={40 / 2.24} ry={32 / 3} fill="#5cc0f2" stroke={K} strokeWidth=".7" />
        <ellipse cx={X(565)} cy={Y(704)} rx={32 / 2.24} ry={18 / 3} fill="#155f92" stroke={K} strokeWidth=".7" />
      </g>
      <polygon points={pts([840, 505, 852, 497, 880, 492, 925, 530, 990, 473, 1030, 475, 1060, 450, 1078, 460, 1050, 492, 1020, 500, 1000, 520, 1000, 545, 925, 584, 885, 568, 882, 545, 850, 520])} fill="#1a79b8" stroke={K} strokeWidth="1" />
      <polygon points={pts([868, 510, 885, 500, 925, 540, 905, 552, 868, 510])} fill={TOP} stroke={K} strokeWidth="1" />
      <polyline points={pts([925, 545, 995, 485, 1025, 490, 1060, 460])} fill="none" stroke={K} strokeWidth="1" />
      <polyline points={pts([890, 550, 925, 565, 970, 530, 1000, 515])} fill="none" stroke={K} strokeWidth="1" />
      <E x={898} y={523} rx={6} ry={5} />
      <E x={985} y={540} rx={13} ry={9} />
      <E x={920} y={577} rx={5} ry={4} />
      {bumps.map((b, i) => (
        <polygon key={i} points={pts([205 + b[0], 733 + b[1], 235 + b[0], 718 + b[1], 230 + b[0], 745 + b[1], 218 + b[0], 765 + b[1], 206 + b[0], 750 + b[1]])} fill="#3f9fd4" stroke={K} strokeWidth=".7" />
      ))}
      <g fontSize="7" fontWeight="bold" fill="#04121c" fontFamily="'Liberation Sans',sans-serif">
        <text x={X(180)} y={Y(778)} transform={`rotate(48 ${X(180)} ${Y(778)})`}>M30</text>
        <text x={X(478)} y={Y(1012)} transform={`rotate(48 ${X(478)} ${Y(1012)})`}>M30</text>
        <text x={X(822)} y={Y(1052)} transform={`rotate(-48 ${X(822)} ${Y(1052)})`}>M30</text>
        <text x={X(1212)} y={Y(746)} transform={`rotate(-48 ${X(1212)} ${Y(746)})`}>M30</text>
      </g>
      <g stroke="#f01010" strokeWidth="1" fill="none">
        <polyline points={pts([1390, 350, 1388, 522])} />
        <polyline points={pts([1278, 438, 1388, 522, 1505, 438])} />
        <polygon points={pts([1390, 350, 1401, 385, 1390, 400, 1379, 385])} />
        <polygon points={pts([1278, 438, 1312, 443, 1305, 466, 1296, 456])} />
        <polygon points={pts([1505, 438, 1470, 450, 1478, 470, 1490, 460])} />
      </g>
      <g fontSize="14" fill="#f01010" fontFamily="'Liberation Sans',sans-serif">
        <text x={X(1297)} y={Y(432)}>Y</text>
        <text x={X(1409)} y={Y(350)}>Z</text>
        <text x={X(1523)} y={Y(437)}>X</text>
      </g>
      <g strokeWidth="1" fill="none">
        <path d="M46 609V572" stroke="#f01010" strokeWidth="2" />
        <path d="M42 582l4-10 4 10-4 5z" stroke="#f01010" />
        <path d="M46 609L14 593" stroke="#b01010" />
        <path d="M12 592l12 1-3 7-4-2z" stroke="#b01010" />
        <path d="M46 609l28-16" stroke="#18a8b0" />
        <path d="M76 592l-12 1 3 7 4-2z" stroke="#18a8b0" />
      </g>
      <g fontSize="14" fontFamily="'Liberation Sans',sans-serif">
        <text x="50" y="566" fill="#f01010">Z</text>
        <text x="16" y="587" fill="#b01010">Y</text>
        <text x="79" y="587" fill="#18a8b0">X</text>
      </g>
    </svg>
  );
}

const tree: [string, string, string][] = [
  ['+', 'active', '激活'], ['', 'machine', '机床'], ['', 'nc', 'NC程序'], ['', 'path', '刀具路径'], ['', 'tools3', '刀具'], ['', 'blobT', '边界'], ['', 'refl', '参考线'], ['', 'feature', '特征设置'],
  ['-', 'ucs', '用户坐标系'], ['c1', 'xyz', '> F-1'], ['+', 'layers', '层和组合'], ['-', 'model', '模型'], ['c2', 'model', 'xq'], ['', 'stock', '残留模型'], ['', 'group', '组'], ['L', 'macroT', '宏'],
];
function Box({ sign }: { sign: string }) {
  return (
    <g>
      <rect x="3.500" y="5.500" width="11" height="11" fill="#f2f2f2" stroke="#999" />
      <path d={sign === '+' ? 'M6 11h6M9 8v6' : 'M6 11h6'} stroke="#1a3a8a" />
    </g>
  );
}
function Guide({ exp, last, first }: { exp?: string; last?: boolean; first?: boolean }) {
  return (
    <svg className="w-[18px] h-[22px] shrink-0" viewBox="0 0 18 22">
      <path d={`M9.500 ${first ? 11 : 0}V${last ? 11 : 22}M9.500 11H18`} stroke="#777" strokeDasharray="1 1" fill="none" />
      {exp && <Box sign={exp} />}
    </svg>
  );
}
function Tree() {
  return (
    <div className="pt-[1px] pl-[2px]">
      {tree.map(([k, ic, t], i) => (
        <div key={i} className="flex items-center h-[22.05px] text-[15px] text-[#111] whitespace-nowrap">
          {k === 'c1' ? (
            <>
              <Guide />
              <svg className="w-[22px] h-[22px] shrink-0" viewBox="0 0 22 22"><path d="M9.500 0V11H20" stroke="#777" strokeDasharray="1 1" fill="none" /></svg>
              <div className="ml-[14px] w-[14px]"><Ic n="bulbY" s="w-[14px] h-[16px]" /></div>
              <div className="ml-[1px]"><Ic n={ic} s="w-[18px] h-[18px]" /></div>
              <span className="ml-[2px] px-[3px] bg-[#eeeeee] font-bold leading-[22px]">{t}</span>
            </>
          ) : k === 'c2' ? (
            <>
              <Guide />
              <svg className="w-[18px] h-[22px] shrink-0" viewBox="0 0 18 22"><path d="M9.500 0V6M14 11H18" stroke="#777" strokeDasharray="1 1" fill="none" /><Box sign="+" /></svg>
              <div className="ml-[1px]"><Ic n={ic} s="w-[18px] h-[18px]" /></div>
              <span className="ml-[4px] text-[15px]">{t}</span>
            </>
          ) : (
            <>
              <Guide exp={k === '+' || k === '-' ? k : k === 'L' ? '+' : undefined} last={k === 'L'} first={i === 0} />
              <div className="w-[18px] flex justify-center shrink-0"><Ic n={ic} s="w-[18px] h-[18px]" /></div>
              <span className={`ml-[4px] ${k === '-' && i === 8 ? 'font-bold' : ''}`}>{t}</span>
            </>
          )}
        </div>
      ))}
    </div>
  );
}
function Tab({ n, cl }: { n: string; cl: string }) {
  return <div className={`flex items-center justify-center border border-b-0 border-[#a8a8a8] ${cl}`}><Ic n={n} s="w-[24px] h-[24px]" /></div>;
}
function RT({ n, tri }: { n: string; tri?: boolean }) {
  return (
    <div className="relative w-[30px] h-[24px] flex items-center justify-center">
      <Ic n={n} />
      {tri && <span className="absolute right-[2px] bottom-0 w-0 h-0 border-l-[5px] border-l-transparent border-b-[5px] border-b-[#111]" />}
    </div>
  );
}
function Rule({ cl }: { cl: string }) {
  return <div className={`h-px mx-[3px] bg-[#b4b4b4] ${cl}`} />;
}
const menus: [string, string][] = [['文件(F)', ''], ['查看(V)', 'ml-[16px]'], ['插入(I)', 'ml-[17px]'], ['显示(D)', 'ml-[14px]'], ['工具(T)', 'ml-[16px]'], ['帮助(H)', 'ml-[15px]']];

export default function App() {
  return (
    <div className="relative w-[1690px] h-[974px] overflow-hidden bg-[#0b8ae8] pt-[5px] pl-[6px] pr-[5px] pb-[5px] [font-family:'Noto_Sans','Noto_Sans_CJK_SC',sans-serif]">
      <div className="flex flex-col h-full bg-[linear-gradient(#1c5288_0%,#1a5590_60%,#2b88c8_96%,#5ab0e0_100%)]">
        <div className="h-[33px] shrink-0 flex items-start pl-[9px] bg-[linear-gradient(90deg,#1c5288_0%,#1c5288_90%,#7d95ae_100%)]">
          <div className="mt-[7px] flex items-center h-[20px] rounded-[8px] bg-[#9fb2cc] shadow-[0_0_7px_5px_#9fb2cc]">
            <Ic n="app" s="w-[20px] h-[20px]" />
            <span className="ml-[4px] text-[15.2px] leading-[20px] text-[#10182a] whitespace-pre">PowerMILL Pro 2016 FULL 授权    [ 可编辑项目 * XQ ]</span>
          </div>
          <div className="ml-auto mr-[3px] flex h-[24px] border border-t-0 border-[#223a55] rounded-b-[5px] overflow-hidden">
            <div className="w-[35px] flex items-center justify-center border-r border-[#cfd8e2] bg-[linear-gradient(#aebccb_0%,#8fa3b8_45%,#3f6288_50%,#466a90_100%)]"><span className="mt-[8px] w-[15px] h-[4px] bg-white" /></div>
            <div className="w-[33px] flex items-center justify-center border-r border-[#cfd8e2] bg-[linear-gradient(#aebccb_0%,#8fa3b8_45%,#4f7095_50%,#6a859f_100%)]"><span className="w-[17px] h-[13px] border-[3px] border-t-[4px] border-[#e6e6e6]" /></div>
            <div className="w-[59px] flex items-center justify-center bg-[linear-gradient(#e09a8c_0%,#d27a68_45%,#b8391d_55%,#c85a40_100%)]">
              <svg viewBox="0 0 16 14" className="w-[16px] h-[14px]"><path d="M1 1h4l3 3.500L11 1h4l-5 6 5 6h-4L8 9.500 5 13H1l5-6z" fill="#f2f2f2" stroke="#555" strokeWidth=".8" /></svg>
            </div>
          </div>
        </div>
        <div className="flex-1 min-h-0 ml-[6px] mr-[3px] mb-[6px] flex flex-col bg-[#f0f0f0] border border-[#15304e]">
          <div className="h-[27px] shrink-0 flex items-center pl-[6px] text-[15px] text-[#111] border-b border-[#9aa0a8] bg-[linear-gradient(#fbfcff_0%,#f0f3fb_35%,#dde3f1_100%)]">
            {menus.map(([m, c]) => <span key={m} className={c}>{m}</span>)}
          </div>

          <Band>
            <Slot n="open" cl="ml-[2px]" /><Slot n="save" /><Sep cl="mx-[3px]" /><Slot n="print" /><Sep cl="ml-[7px] mr-[5px]" />
            <Slots ns={['box', 'leads', 'toolRed', 'toolBall', 'toolU', 'axisPen', 'dots', 'toolCalc']} />
            <Sep cl="ml-[8px] mr-[2px]" /><Slot n="mill" /><Sep cl="ml-[7px] mr-[3px]" /><Slot n="path" />
            <div className="ml-[3px] w-[255px] h-[29px] bg-white rounded-[3px] flex items-center shrink-0 pl-[3px] pr-[5px]">
              <Ic n="greenBox" s="w-[20px] h-[20px]" />
              <span className="ml-[3px] text-[15px] text-[#111]">平行精加工</span>
              <span className="ml-auto"><Arrow /></span>
            </div>
            <Sep cl="ml-[6px] mr-[6px]" />
            <Slots ns={['toolStar', 'toolCheck', 'calc', 'ruler']} />
            <Sep cl="ml-[5px] mr-[5px]" /><Slots ns={['toolMove', 'arrows4']} /><Sep cl="ml-[10px] mr-[5px]" /><Slot n="dualBox" />
            <Close cl="ml-[1px] mr-[1px]" />
          </Band>
          <Band>
            <Slot n="path" cl="ml-[3px]" /><Combo cl="ml-[7px] w-[160px]" /><Slot n="tools3" cl="ml-[15px]" /><Combo cl="ml-[2px] w-[160px]" />
            <Slot n="bulb" cl="ml-[8px]" />
            <div className="ml-[6px] flex"><Slots ns={['play', 'pause', 'stepB', 'stepF', 'prev', 'next', 'first', 'last']} /></div>
            <div className="ml-[30px] w-[96px] h-[26px] flex items-center shrink-0">
              <div className="w-[83px] h-[4px] bg-[#e4e4e4] border border-[#bbb]" />
              <div className="w-[13px] h-[30px] rounded-[2px] border border-[#999] bg-[linear-gradient(#f0f0f0_0%,#f0f0f0_35%,#d8d8d8_36%,#d8d8d8_100%)]" />
            </div>
            <Slot n="clock" cl="ml-[11px]" /><Close cl="ml-[31px] mr-[3px]" />
          </Band>
          <Band>
            <Combo cl="ml-[4px] w-[158px]" /><Slot n="stack" cl="ml-[5px]" /><Sep cl="mr-[8px]" />
            <Slots off ns={['spin', 'wave', 'wave2', 'gauge', 'pArrow', 'penRot', 'docs', 'table', 'copy', 'clock', 'cross']} />
            <Sep cl="ml-[3px] mr-[6px]" />
            <Btn n="surf1" off /><Btn n="surf2" off /><Btn n="surf3" off />
            <Slots off ns={['dots4', 'nodes', 'axisPen', 'fan', 'diag', 'trap', 'trap2']} />
            <Sep cl="ml-[3px] mr-[6px]" />
            <Slots off ns={['search', 'bulbT', 'uT', 'stackT']} />
            <Close cl="ml-[1px] mr-[4px]" />
          </Band>
          <Band>
            <Slot n="star" cl="ml-[2px]" /><Combo cl="ml-[8px] w-[158px]" />
            <div className="ml-[13px] flex"><Slot n="starCur" off /><Slot n="plus" /><Slot n="lift" off /></div>
            <Sep cl="ml-[5px] mr-[6px]" /><Slots off ns={['open', 'save']} /><Sep cl="ml-[5px] mr-[3px]" />
            <Slots off ns={['blob', 'sShape', 'boxIn']} /><Slots ns={['frame', 'penBlue']} />
            <Sep cl="ml-[8px] mr-[2px]" />
            <Slot n="spin" off /><Slot n="starPen" /><Slots off ns={['eraser', 'undo', 'redo', 'cross']} />
            <Close cl="ml-[7px] mr-[2px]" />
          </Band>
          <Band cl="border-t">
            <WhiteDrop n="boxNew" /><Combo cl="ml-[19px] w-[159px]" /><Sep cl="ml-[10px] mr-[6px]" /><Slots off ns={['open', 'save']} />
            <Sep cl="ml-[4px] mr-[4px]" /><Slots off ns={['blob', 'star2', 'sShape', 'boxIn']} /><Slots ns={['frame', 'penBlue']} />
            <Sep cl="ml-[9px] mr-[1px]" />
            <Slot n="spin" off /><Slot n="blobPen" /><Slots off ns={['clock', 'eraser', 'undo', 'redo', 'cross']} />
            <Close cl="ml-[6px]" /><Sep cl="ml-[5px] mr-[1px]" />
            <Slot n="lock" />
            <div className="w-[25px] h-[26px] shrink-0 flex items-center justify-center"><span className="w-[24px] h-[24px] bg-[#4a74b0] text-white text-[15px] font-bold leading-[24px] text-center [font-family:'Liberation_Sans',sans-serif] tracking-[-1px]">MC</span></div>
            <Slot n="blobT" /><Slot n="macro" />
            <div className="ml-[3px] mb-[2px] w-[117px] h-[24px] shrink-0 rounded-[3px] border border-[#777] bg-[#e4e4e4] text-[15px] text-black flex items-center justify-center whitespace-nowrap">接触点转化.mac</div>
            <div className="ml-[5px] mb-[2px] w-[150px] h-[24px] shrink-0 rounded-[3px] border border-[#777] bg-[#e4e4e4] text-[15px] text-black flex items-center justify-center whitespace-nowrap">接触点转化+0.3.mac</div>
            <Close cl="ml-[11px] mr-[3px]" />
          </Band>

          <div className="flex-1 min-h-0 flex pb-[2px]">
            <div className="w-[292px] shrink-0 pl-[3px] pr-[10px] flex flex-col">
              <div className="h-[19px] shrink-0 flex items-center">
                <div className="flex-1 h-[5px] border-y border-[#c0c0c0] bg-white" />
                <span className="ml-[5px] w-[14px] h-[14px] bg-[#d9e6f2] flex items-center justify-center text-[10px] leading-none text-[#556]">❐</span>
                <span className="w-[15px] h-[14px] bg-[#d9e6f2] flex items-center justify-center text-[13px] font-bold leading-none text-[#556]">×</span>
              </div>
              <div className="flex-1 min-h-0 bg-white border-l-2 border-t-2 border-r border-b border-[#a8a8a8]">
                <div className="h-[34px] bg-[#efefef] border-b border-[#a8a8a8] flex items-end pl-[2px]">
                  <Tab n="treeI" cl="w-[40px] h-[35px] bg-white relative -mb-px" />
                  <Tab n="globe" cl="w-[32px] h-[31px] bg-[linear-gradient(#eee,#d8d8d8)]" />
                  <Tab n="bin" cl="ml-[1px] w-[34px] h-[31px] bg-[linear-gradient(#eee,#d8d8d8)]" />
                </div>
                <div className="h-[3px] bg-[#efefef] border-b border-[#bbb]" />
                <Tree />
              </div>
            </div>
            <div className="flex-1 min-w-0 bg-[linear-gradient(#2c4a60_0%,#17242f_50%,#0a0f14_80%,#000000_100%)]">
              <Scene />
            </div>
            <div className="w-[31px] shrink-0 flex flex-col pt-[3px] border-l border-white">
              <RT n="tW" tri /><RT n="rW" tri /><RT n="fW" tri /><RT n="cubeIso" tri />
              <div className="h-[8px]" />
              <RT n="zBack" /><RT n="refDoc" /><RT n="zFit" tri />
              <div className="h-[6px]" /><RT n="zBox" />
              <Rule cl="mt-[8px] mb-[6px]" /><RT n="box" /><Rule cl="mt-[8px] mb-[6px]" />
              <div className="w-[27px] h-[24px] mx-auto rounded-[4px] border border-[#666] bg-[#dedede] flex items-center justify-center"><Ic n="gold" /></div>
              <div className="h-[5px]" /><RT n="globeW" />
              <Rule cl="mt-[10px] mb-[4px]" /><RT n="curBox" tri />
              <div className="h-[5px]" /><RT n="curUndo" />
              <div className="h-[3px]" /><div className="ml-[3px]"><Close cl="" /></div>
              <Rule cl="mt-[4px]" />
            </div>
          </div>

          <Band cl="h-[33px] border-t">
            <WhiteDrop n="boxGold" />
            <div className="ml-[17px] flex"><Slots ns={['bk1', 'bk2', 'bk3']} /></div>
            <Combo cl="ml-[2px] w-[160px]" /><Slot n="stack" cl="ml-[5px]" /><Sep cl="ml-[10px] mr-[6px]" /><Slot n="drill" off />
            <Sep cl="ml-[53px] mr-[6px]" /><Slots off ns={['axisPen', 'dia1', 'dia2']} /><Sep cl="ml-[3px] mr-[6px]" />
            <Slots off ns={['pencilG', 'cross']} /><Close cl="ml-[6px] mr-[4px]" />
          </Band>
          <div className="h-[37px] shrink-0 flex items-center pb-[2px] border-b border-[#b0b0b0]">
            <Slot n="ucsNew" cl="ml-[2px]" />
            <Combo cl="ml-[4px] w-[116px]" text="F-1" />
            <Btn n="xC" cl="ml-[5px] bg-[#e0e0e0]" /><Slot n="yC" cl="ml-[2px]" /><Slot n="zC" cl="ml-[2px]" />
            <Slot n="grid" cl="ml-[12px]" /><Field cl="ml-[2px] w-[70px]" />
            <Field cl="ml-[13px] w-[75px]">0</Field><Field cl="ml-[5px] w-[74px]">916.905</Field><Field cl="ml-[5px] w-[75px]">-629.28</Field>
            <Slot n="xyzL" cl="ml-[3px]" /><Slot n="snap" /><Field cl="ml-[4px] w-[120px]" />
            <Slot n="rpm" cl="ml-[12px]" /><Slot n="r012" cl="ml-[11px]" /><Field cl="ml-[3px] w-[76px]">毫米</Field>
            <Slot n="cCross" cl="ml-[3px]" /><Field cl="ml-[2px] w-[74px]" /><Slot n="toolD" cl="ml-[6px]" /><Field cl="w-[74px]" />
            <Slot n="dia" cl="ml-[5px]" /><Field cl="w-[76px]" /><Slot n="angle" cl="ml-[2px]" /><Field cl="ml-[2px] w-[75px]" />
            <div className="ml-[217px] w-[90px] h-[22px] shrink-0 flex items-center bg-[linear-gradient(90deg,#1a74b0,#2a9ad8)] rounded-r-full">
              <span className="ml-[3px] text-white text-[16px] leading-none [font-family:'Liberation_Sans',sans-serif]">Delcam</span>
              <span className="ml-auto w-[22px] h-[22px] rounded-full bg-[#1a6a9a] border-2 border-[#bfe3f5]" />
            </div>
          </div>
        </div>
      </div>

      <div className="absolute left-[1407px] top-[881px] pointer-events-none">
        <svg width="72" height="79" viewBox="0 0 72 79">
          <path d="M36 0l36 20v39L36 79 0 59V20z" fill="#59b4ec" fillOpacity=".72" />
          <path d="M36 0C10 20 8 50 36 79M72 20C40 12 12 28 0 59M72 59C62 30 36 10 0 20" fill="none" stroke="#e8f6ff" strokeOpacity=".7" />
          <path d="M36 22l20 11v22L36 66 16 55V33z" fill="#a8dcf6" fillOpacity=".9" stroke="#dff3ff" />
          <path d="M36 44l20-11v22L36 66z" fill="#6cbce8" />
        </svg>
      </div>
      <div className="absolute left-[1488px] top-[892px] text-[41px] leading-[44px] font-bold text-white/50 pointer-events-none whitespace-nowrap">3D世界网</div>
      <div className="absolute left-[1488px] top-[930px] text-[17px] leading-[20px] tracking-[3px] text-white/40 pointer-events-none whitespace-nowrap">WWW.3DSJW.COM</div>
    </div>
  );
}
